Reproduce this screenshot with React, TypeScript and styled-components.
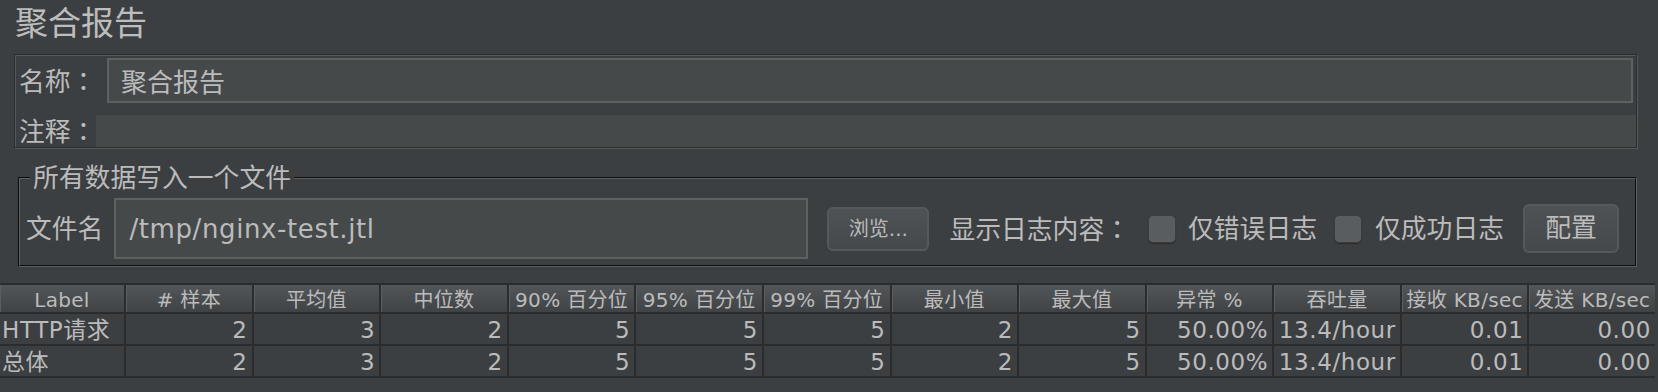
import React from "react";
import styled, { createGlobalStyle } from "styled-components";

const GlobalStyle = createGlobalStyle`
  html, body { margin: 0; padding: 0; background: #3c3f41; }
  body {
    font-family: "DejaVu Sans", "Noto Sans CJK SC", sans-serif;
    color: #bbbbbb;
  }
  * { box-sizing: border-box; }
`;

const Page = styled.div`
  width: 1658px;
  height: 392px;
  overflow: hidden;
  background: #3c3f41;
`;

const Title = styled.h1`
  margin: 0;
  height: 54px;
  padding: 6px 0 0 15px;
  font-size: 33px;
  line-height: 35px;
  font-weight: normal;
  color: #bdbdbd;
`;

const NamePanel = styled.div`
  margin: 0 21px 0 14px;
  border: 1px solid #2b2d2f;
  box-shadow: inset 1px 1px 0 #56595b, 1px 1px 0 #56595b;
  padding: 3px 0 0 4px;
`;

const FieldRow = styled.div<{ $h: number; $gapTop?: number; $padRight?: number }>`
  display: flex;
  align-items: center;
  height: ${(p) => p.$h}px;
  margin-top: ${(p) => p.$gapTop ?? 0}px;
  padding-right: ${(p) => p.$padRight ?? 0}px;
`;

const Label = styled.span<{ $w?: number }>`
  flex: none;
  width: ${(p) => (p.$w ? `${p.$w}px` : "auto")};
  font-size: 25.8px;
  line-height: 30px;
  white-space: nowrap;
`;

const Colon = styled.span`
  font-family: "Noto Sans CJK TC", "Noto Sans CJK JP", sans-serif;
`;

const TextBox = styled.div<{ $fs: number; $pad: number; $ls?: number }>`
  flex: 1;
  align-self: stretch;
  display: flex;
  align-items: center;
  background: #45494a;
  border: 2px solid #5e6162;
  padding-left: ${(p) => p.$pad}px;
  font-size: ${(p) => p.$fs}px;
  letter-spacing: ${(p) => p.$ls ?? 0}px;
  color: #bbbbbb;
  white-space: nowrap;
`;

const CommentBox = styled.div`
  flex: 1;
  align-self: stretch;
  background: #45494a;
`;

const Group = styled.fieldset`
  margin: 17px 21px 0 18px;
  border: 2px groove #5d6163;
  padding: 7px 0 6px 6px;
  min-width: 0;
`;

const Legend = styled.legend`
  margin-left: 4px;
  padding: 0 3px;
  font-size: 25.8px;
  line-height: 26px;
  color: #bbbbbb;
`;

const FileRow = styled.div`
  display: flex;
  align-items: center;
  height: 61px;
`;

const FileBox = styled(TextBox)`
  flex: none;
  width: 694px;
  margin-left: 11px;
`;

const Button = styled.button<{ $w: number; $h: number; $fs: number }>`
  flex: none;
  width: ${(p) => p.$w}px;
  height: ${(p) => p.$h}px;
  padding: 0;
  border: 2px solid #56595b;
  border-radius: 6px;
  background: linear-gradient(#4e5254, #45494b);
  color: #bbbbbb;
  font-family: "DejaVu Sans", "Noto Sans CJK SC", sans-serif;
  font-size: ${(p) => p.$fs}px;
  line-height: 1;
`;

const Check = styled.span`
  flex: none;
  width: 28px;
  height: 28px;
  border-radius: 5px;
  background: #5a5d5f;
  border: 1px solid #3b3e40;
  box-shadow: 0 1px 1px #2b2b2b;
`;

const Spacer = styled.span<{ $w: number }>`
  flex: none;
  width: ${(p) => p.$w}px;
`;

const Table = styled.div`
  margin-top: 16px;
  width: 1655px;
  background: #2a2c2e;
  padding: 2px 0;
  display: flex;
  flex-direction: column;
  gap: 2px;
`;

const GridRow = styled.div<{ $h: number }>`
  display: grid;
  grid-template-columns: 124px repeat(12, 1fr);
  column-gap: 2px;
  height: ${(p) => p.$h}px;
`;

const HeadCell = styled.div`
  background: linear-gradient(#525659, #404345);
  box-shadow: inset 1px 0 0 #5a5e60;
  font-size: 20px;
  line-height: 27px;
  padding-top: 2px;
  text-align: center;
  white-space: nowrap;
  overflow: hidden;
  letter-spacing: 0.3px;
  color: #bbbbbb;
`;

const Cell = styled.div<{ $left?: boolean }>`
  background: #3c3f41;
  font-size: 23px;
  line-height: 30px;
  padding: 1px 4px 0 2px;
  text-align: ${(p) => (p.$left ? "left" : "right")};
  white-space: nowrap;
  overflow: hidden;
  letter-spacing: 0.6px;
  color: #bbbbbb;
`;

const headers = [
  "Label",
  "# 样本",
  "平均值",
  "中位数",
  "90% 百分位",
  "95% 百分位",
  "99% 百分位",
  "最小值",
  "最大值",
  "异常 %",
  "吞吐量",
  "接收 KB/sec",
  "发送 KB/sec",
];

const rows = [
  ["HTTP请求", "2", "3", "2", "5", "5", "5", "2", "5", "50.00%", "13.4/hour", "0.01", "0.00"],
  ["总体", "2", "3", "2", "5", "5", "5", "2", "5", "50.00%", "13.4/hour", "0.01", "0.00"],
];

export default function App() {
  return (
    <Page>
      <GlobalStyle />
      <Title>聚合报告</Title>
      <NamePanel>
        <FieldRow $h={45} $padRight={3}>
          <Label $w={88}>
            名称<Colon>：</Colon>
          </Label>
          <TextBox $fs={26} $pad={12}>聚合报告</TextBox>
        </FieldRow>
        <FieldRow $h={32} $gapTop={12}>
          <Label $w={77}>
            注释<Colon>：</Colon>
          </Label>
          <CommentBox />
        </FieldRow>
      </NamePanel>

      <Group>
        <Legend>所有数据写入一个文件</Legend>
        <FileRow>
          <Label>文件名</Label>
          <FileBox $fs={26} $pad={13} $ls={0.6}>
            /tmp/nginx-test.jtl
          </FileBox>
          <Spacer $w={19} />
          <Button $w={102} $h={44} $fs={20}>
            浏览...
          </Button>
          <Spacer $w={20} />
          <Label>
            显示日志内容<Colon>：</Colon>
          </Label>
          <Spacer $w={18} />
          <Check />
          <Spacer $w={12} />
          <Label>仅错误日志</Label>
          <Spacer $w={17} />
          <Check />
          <Spacer $w={13} />
          <Label>仅成功日志</Label>
          <Spacer $w={19} />
          <Button $w={96} $h={49} $fs={25.8}>
            配置
          </Button>
        </FileRow>
      </Group>

      <Table>
        <GridRow $h={27}>
          {headers.map((h) => (
            <HeadCell key={h}>{h}</HeadCell>
          ))}
        </GridRow>
        {rows.map((r, i) => (
          <GridRow $h={30} key={i}>
            {r.map((v, j) => (
              <Cell key={j} $left={j === 0}>
                {v}
              </Cell>
            ))}
          </GridRow>
        ))}
      </Table>
    </Page>
  );
}
